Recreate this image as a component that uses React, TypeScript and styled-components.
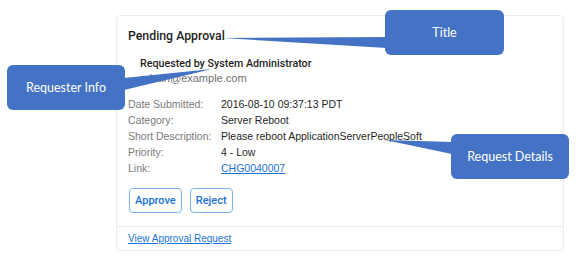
import styled, {createGlobalStyle} from "styled-components";

const GlobalStyle = createGlobalStyle`
  html, body {
    margin: 0;
    padding: 0;
    background: #ffffff;
  }
  body {
    font-family: "Liberation Sans", Arial, sans-serif;
  }
`

type Detail = { label: string, value: string, link?: boolean }

const details: Detail[] = [
    {label: "Date Submitted:", value: "2016-08-10 09:37:13 PDT"},
    {label: "Category:", value: "Server Reboot"},
    {label: "Short Description:", value: "Please reboot ApplicationServerPeopleSoft"},
    {label: "Priority:", value: "4 - Low"},
    {label: "Link:", value: "CHG0040007", link: true},
]

export default function App() {
    return (
        <>
            <GlobalStyle/>
            <Page>
                <Card>
                    <CardBody>
                        <Title>Pending Approval</Title>
                        <Requester>
                            <RequesterName>Requested by System Administrator</RequesterName>
                            <RequesterEmail>admin@example.com</RequesterEmail>
                        </Requester>
                        <DetailGrid>
                            {details.map(d => (
                                <DetailRow key={d.label}>
                                    <Label>{d.label}</Label>
                                    {d.link ? <ValueLink href="#">{d.value}</ValueLink> : <Value>{d.value}</Value>}
                                </DetailRow>
                            ))}
                        </DetailGrid>
                        <Actions>
                            <ActionButton>Approve</ActionButton>
                            <ActionButton>Reject</ActionButton>
                        </Actions>
                    </CardBody>
                    <CardFooter>
                        <FooterLink href="#">View Approval Request</FooterLink>
                    </CardFooter>
                </Card>

                <Pointers width={576} height={258} viewBox="0 0 576 258">
                    <polygon points="222,38 387,37 387,48" fill="#4472c4"/>
                    <polygon points="124,78 124,90 212,69" fill="#4472c4"/>
                    <polygon points="385,140 452,142 452,154" fill="#4472c4"/>
                </Pointers>

                <Callout $left={385} $top={10} $width={119}>Title</Callout>
                <Callout $left={7} $top={65} $width={118}>Requester Info</Callout>
                <Callout $left={451} $top={134} $width={118}>Request Details</Callout>
            </Page>
        </>
    )
}

const Page = styled.div`
  position: relative;
  width: 576px;
  height: 258px;
  overflow: hidden;
  padding: 15px 0 0 116px;
  box-sizing: border-box;
`

const Card = styled.div`
  width: 448px;
  height: 236px;
  box-sizing: border-box;
  border: 1px solid #ebebeb;
  border-radius: 4px;
  display: flex;
  flex-direction: column;
  background: #fff;
`

const CardBody = styled.div`
  flex: 1;
  padding: 12px 11px 0 11px;
  display: flex;
  flex-direction: column;
`

const Title = styled.div`
  font-family: Roboto, "Liberation Sans", sans-serif;
  font-size: 12.3px;
  font-weight: 500;
  color: #1f1f1f;
  line-height: 16px;
`

const Requester = styled.div`
  margin: 12px 0 0 12px;
  display: flex;
  flex-direction: column;
`

const RequesterName = styled.div`
  font-family: Roboto, "Liberation Sans", sans-serif;
  font-size: 10.7px;
  font-weight: 500;
  color: #1f1f1f;
  line-height: 15px;
`

const RequesterEmail = styled.div`
  font-size: 11px;
  color: #6f6f6f;
  line-height: 15px;
`

const DetailGrid = styled.div`
  margin-top: 10px;
  display: flex;
  flex-direction: column;
`

const DetailRow = styled.div`
  display: grid;
  grid-template-columns: 93px auto;
  line-height: 16px;
  font-size: 10.5px;
`

const Label = styled.span`
  color: #7a7a7a;
`

const Value = styled.span`
  color: #1f1f1f;
`

const ValueLink = styled.a`
  color: #1a73d9;
  text-decoration: underline;
  justify-self: start;
`

const Actions = styled.div`
  display: flex;
  gap: 8px;
  margin-top: 12px;
  padding-left: 1px;
`

const ActionButton = styled.button`
  height: 25px;
  padding: 0 5px;
  border: 1px solid #7fb2ea;
  border-radius: 4px;
  background: #fff;
  color: #1a73d9;
  font-family: Roboto, "Liberation Sans", sans-serif;
  font-size: 11px;
  font-weight: 500;
`

const CardFooter = styled.div`
  border-top: 1px solid #ebebeb;
  height: 23px;
  padding: 0 11px;
  display: flex;
  align-items: center;
`

const FooterLink = styled.a`
  font-size: 10px;
  color: #1a73d9;
  text-decoration: underline;
`

const Pointers = styled.svg`
  position: absolute;
  left: 0;
  top: 0;
  pointer-events: none;
`

const Callout = styled.div<{ $left: number, $top: number, $width: number }>`
  position: absolute;
  left: ${p => p.$left}px;
  top: ${p => p.$top}px;
  width: ${p => p.$width}px;
  height: 45px;
  background: #4472c4;
  border-radius: 6px;
  color: #fff;
  font-family: Lato, "Noto Sans", sans-serif;
  font-size: 12.5px;
  display: flex;
  align-items: center;
  justify-content: center;
`
